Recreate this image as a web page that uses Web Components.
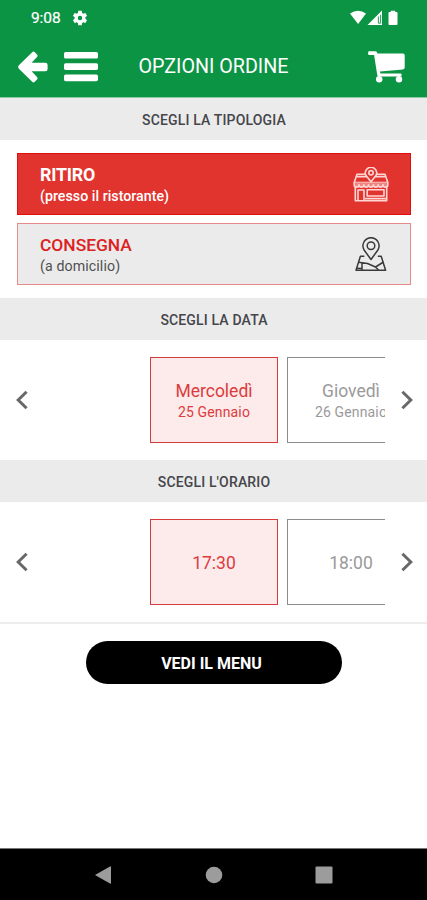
<!DOCTYPE html>
<html lang="it">
<head>
<meta charset="UTF-8">
<meta name="viewport" content="width=device-width, initial-scale=1">
<title>Opzioni ordine</title>
<style>
    html, body { margin: 0; height: 100%; }
    body { font-family: Roboto, "Liberation Sans", sans-serif; background: #fff; overflow: hidden; }
</style>
</head>
<body>
<order-screen></order-screen>

<script>
class StatusBar extends HTMLElement {
    constructor() {
        super();
        this.attachShadow({ mode: 'open' });
    }

    connectedCallback() {
        this.shadowRoot.innerHTML = `
        <style>
            :host { display: flex; align-items: center; box-sizing: border-box; height: 36px; padding: 0 29px 0 31px; background: #0c9445; color: #fff; }
            .time { font-size: 15.5px; line-height: 18px; font-weight: 400; -webkit-text-stroke: 0.2px; letter-spacing: -0.1px; }
            svg { display: block; fill: #fff; }
            .gear { margin-left: 10px; }
            .right { margin-left: auto; display: flex; align-items: center; }
        </style>
        <span class="time">9:08</span>
        <svg class="gear" width="18" height="18" viewBox="0 0 24 24"><path d="M19.14 12.94c.04-.3.06-.61.06-.94 0-.32-.02-.64-.07-.94l2.03-1.58a.49.49 0 0 0 .12-.61l-1.92-3.32a.488.488 0 0 0-.59-.22l-2.39.96c-.5-.38-1.03-.7-1.62-.94l-.36-2.54a.484.484 0 0 0-.48-.41h-3.84c-.24 0-.43.17-.47.41l-.36 2.54c-.59.24-1.13.57-1.62.94l-2.39-.96c-.22-.08-.47 0-.59.22L2.74 8.87c-.12.21-.08.47.12.61l2.03 1.58c-.05.3-.09.63-.09.94s.02.64.07.94l-2.03 1.58a.49.49 0 0 0-.12.61l1.92 3.32c.12.22.37.29.59.22l2.39-.96c.5.38 1.03.7 1.62.94l.36 2.54c.05.24.24.41.48.41h3.84c.24 0 .44-.17.47-.41l.36-2.54c.59-.24 1.13-.56 1.62-.94l2.39.96c.22.08.47 0 .59-.22l1.92-3.32c.12-.22.07-.47-.12-.61l-2.01-1.58zM12 15a3 3 0 1 1 0-6 3 3 0 0 1 0 6z"/></svg>
        <div class="right">
            <svg width="48" height="16" viewBox="0 0 48 16">
                <path d="M0 3.6Q8 -2.2 16 3.6L8.1 14Z"/>
                <path d="M17.5 15L32 0.6V15Z"/>
                <path d="M28.4 6.5V13.2H30.6V4.8" fill="none" stroke="#0c9445" stroke-width="0.9"/>
                <path d="M38.5 2.8q0-.9.9-.9h1.4V.7h4.4v1.2h1.4q.9 0 .9.9v11.3q0 .9-.9.9h-7.2q-.9 0-.9-.9Z"/>
            </svg>
        </div>`;
    }
}
customElements.define('status-bar', StatusBar);

class AppHeader extends HTMLElement {
    constructor() {
        super();
        this.attachShadow({ mode: 'open' });
    }

    connectedCallback() {
        this.shadowRoot.innerHTML = `
        <style>
            :host { display: grid; grid-template-columns: 120px 1fr 120px; align-items: center; box-sizing: border-box; height: 62px; background: #0c9445; color: #fff; border-bottom: 1px solid #8ccaa5; }
            .left { display: flex; align-items: center; padding-left: 18px; gap: 16px; }
            h1 { margin: 0; font-size: 19.7px; line-height: 24px; font-weight: 400; text-align: center; white-space: nowrap; }
            .cart { justify-self: end; margin-right: 22px; }
            svg { display: block; }
        </style>
        <div class="left">
            <svg width="30" height="32" viewBox="0 0 30 32" fill="#fff"><path d="M.9 14.3L14.2 1.2Q15.5 0 16.8 1.2L19 3.4Q20.2 4.7 19 6L13.6 11.7H27.3Q29.6 11.7 29.6 14V18Q29.6 20.3 27.3 20.3H13.6L19 26Q20.2 27.3 19 28.6L16.8 30.8Q15.5 32 14.2 30.8L.9 17.7Q-.6 16 .9 14.3Z"/></svg>
            <svg width="34" height="30" viewBox="0 0 34 30" fill="#fff"><rect width="34" height="6.6" rx="1.6"/><rect y="11.3" width="34" height="6.6" rx="1.6"/><rect y="22.6" width="34" height="6.6" rx="1.6"/></svg>
        </div>
        <h1><slot></slot></h1>
        <svg class="cart" width="37" height="32" viewBox="0 0 37 32">
            <path d="M0.5 0.3H7.3Q8.6 0.3 9 1.6L9.4 2.6H35Q36.7 2.6 36.7 4.3V16.6Q36.7 18.2 35 18.4L12 20.6L12.4 22.6H32.5Q33.7 22.6 33.7 24T32.5 25.6H11Q9.6 25.6 9.3 24.3L6.1 4H1.6Q0 4 0 2.4Z" fill="#fff"/>
            <circle cx="11.2" cy="28.2" r="3.2" fill="#fff"/><circle cx="31" cy="28.2" r="3.2" fill="#fff"/>
        </svg>`;
    }
}
customElements.define('app-header', AppHeader);

class SectionTitle extends HTMLElement {
    constructor() {
        super();
        this.attachShadow({ mode: 'open' });
    }

    connectedCallback() {
        this.shadowRoot.innerHTML = `
        <style>
            :host { display: flex; align-items: center; justify-content: center; height: 42px; background: #ebebeb; color: #45454a; }
            h2 { margin: 0; font-size: 14px; line-height: 18px; font-weight: 500; letter-spacing: 0.15px; padding: 2px 0 0 1px; }
        </style>
        <h2><slot></slot></h2>`;
    }
}
customElements.define('section-title', SectionTitle);

class OrderOption extends HTMLElement {
    constructor() {
        super();
        this.attachShadow({ mode: 'open' });
    }

    connectedCallback() {
        this.shadowRoot.innerHTML = `
        <style>
            :host { display: flex; align-items: center; justify-content: space-between; box-sizing: border-box; height: 62px; padding: 2px 21px 0 22px; border: 1px solid #e58c8a; background: #ebebeb; color: #505050; }
            :host([selected]) { background: #e1342f; border-color: #dc0f0c; color: #fff; }
            .name { font-size: 17.4px; line-height: 22px; font-weight: 500; color: #dc221f; }
            :host([selected]) .name { color: #fff; font-weight: 700; font-size: 17.8px; letter-spacing: -0.2px; }
            .note { font-size: 14.2px; line-height: 20px; letter-spacing: 0.1px; }
            :host([selected]) .note { font-weight: 500; letter-spacing: 0.03px; }
        </style>
        <div>
            <div class="name"><slot name="name"></slot></div>
            <div class="note"><slot name="note"></slot></div>
        </div>
        <slot name="icon"></slot>`;
    }
}
customElements.define('order-option', OrderOption);

class SlidePicker extends HTMLElement {
    constructor() {
        super();
        this.attachShadow({ mode: 'open' });
    }

    connectedCallback() {
        this.shadowRoot.innerHTML = `
        <style>
            :host { display: grid; grid-template-columns: 42px 343px 42px; align-items: center; height: 120px; background: #fff; }
            .track { display: flex; gap: 9px; padding-left: 108px; overflow: hidden; }
            button { display: flex; align-items: center; justify-content: center; height: 40px; padding: 0 0 0 1px; border: 0; background: none; }
            svg { fill: none; stroke: #686868; stroke-width: 3; }
        </style>
        <button aria-label="Indietro"><svg width="12" height="20" viewBox="0 0 12 20"><path d="M10.6 1.8L2.2 10L10.6 18.2"/></svg></button>
        <div class="track"><slot></slot></div>
        <button aria-label="Avanti"><svg width="12" height="20" viewBox="0 0 12 20"><path d="M1.4 1.8L9.8 10L1.4 18.2"/></svg></button>`;
    }
}
customElements.define('slide-picker', SlidePicker);

class PickerCard extends HTMLElement {
    constructor() {
        super();
        this.attachShadow({ mode: 'open' });
    }

    connectedCallback() {
        this.shadowRoot.innerHTML = `
        <style>
            :host { display: flex; flex: none; flex-direction: column; align-items: center; justify-content: center; box-sizing: border-box; width: 128px; height: 86px; padding-top: 2px; border: 1.5px solid #8c8c8c; color: #9a9a9a; background: #fff; white-space: nowrap; }
            :host([selected]) { border-color: #d63b3b; background: #fdeaea; color: #dc3c40; }
            .main { font-size: 17.5px; line-height: 22px; }
            .sub { font-size: 14px; line-height: 20px; letter-spacing: 0.15px; }
        </style>
        <div class="main"><slot></slot></div>
        <div class="sub"><slot name="sub"></slot></div>`;
        if (!this.querySelector('[slot="sub"]')) this.shadowRoot.querySelector('.sub').remove();
    }
}
customElements.define('picker-card', PickerCard);

class PillButton extends HTMLElement {
    constructor() {
        super();
        this.attachShadow({ mode: 'open' });
    }

    connectedCallback() {
        this.shadowRoot.innerHTML = `
        <style>
            :host { display: block; }
            button { display: block; width: 256px; height: 43px; margin: 0 auto; padding: 2px 0 0; border: 0; border-radius: 22px; background: #000; color: #fff; font: 700 16px/20px Roboto, "Liberation Sans", sans-serif; text-indent: -4px; }
        </style>
        <button><slot></slot></button>`;
    }
}
customElements.define('pill-button', PillButton);

class NavigationBar extends HTMLElement {
    constructor() {
        super();
        this.attachShadow({ mode: 'open' });
    }

    connectedCallback() {
        this.shadowRoot.innerHTML = `
        <style>
            :host { display: flex; align-items: center; justify-content: space-between; box-sizing: border-box; height: 52px; padding: 0 94px; background: #000; border-top: 1px solid #777; }
            svg { fill: #9c9c9c; }
        </style>
        <svg width="18" height="18" viewBox="0 0 18 18"><path d="M1 9L16 .4q1-.4 1 .6v16q0 1-1 .6Z"/></svg>
        <svg width="18" height="18" viewBox="0 0 18 18"><circle cx="9" cy="9" r="8.3"/></svg>
        <svg width="18" height="18" viewBox="0 0 18 18"><rect x=".5" y=".5" width="17" height="17" rx="1"/></svg>`;
    }
}
customElements.define('navigation-bar', NavigationBar);

class OrderScreen extends HTMLElement {
    constructor() {
        super();
        this.attachShadow({ mode: 'open' });
    }

    connectedCallback() {
        this.shadowRoot.innerHTML = `
        <style>
            :host { display: flex; flex-direction: column; width: 100%; height: 100vh; background: #fff; }
            .options { display: flex; flex-direction: column; gap: 8px; padding: 13px 16px 13px 17px; }
            .options svg { display: block; fill: none; }
            .footer { border-top: 2px solid #ededed; padding-top: 17px; }
            navigation-bar { margin-top: auto; }
        </style>
        <status-bar></status-bar>
        <app-header>OPZIONI ORDINE</app-header>

        <section-title>SCEGLI LA TIPOLOGIA</section-title>
        <div class="options">
            <order-option selected>
                <span slot="name">RITIRO</span>
                <span slot="note">(presso il ristorante)</span>
                <svg slot="icon" width="36" height="36" viewBox="0 0 36 36" stroke="#ffd6d4" stroke-width="1.6" stroke-linejoin="round">
                    <path d="M13 7.2H4L1.2 15.5H34.8L32 7.2H23M4 9.6H14M22 9.6H32"/>
                    <path d="M1.2 15.5v2.2a2.4 2.4 0 0 0 4.8 0a2.4 2.4 0 0 0 4.8 0a2.4 2.4 0 0 0 4.8 0a2.4 2.4 0 0 0 4.8 0a2.4 2.4 0 0 0 4.8 0a2.4 2.4 0 0 0 4.8 0a2.4 2.4 0 0 0 4.8 0v-2.2" fill="#ef8581"/>
                    <path d="M2.3 20V33.8H33.7V20M5 33V23H11V33M14.2 22.8H31V29H14.2ZM12 31.6H33"/>
                    <path d="M18 14.8L13.2 8.8a5.6 5.6 0 1 1 9.6 0Z" fill="#e1342f"/>
                    <circle cx="18" cy="5.8" r="2.2"/>
                </svg>
            </order-option>
            <order-option>
                <span slot="name">CONSEGNA</span>
                <span slot="note">(a domicilio)</span>
                <svg slot="icon" width="36" height="36" viewBox="0 0 36 36" stroke="#3a3a3a" stroke-width="1.5" stroke-linejoin="round">
                    <path d="M11.4 19.3H7.4L3 33.2H32.6L28.2 19.3H24.8"/>
                    <path d="M5.6 25.2L14.5 26.5L22.5 30L30.5 25M9 26V33M22.5 30L25.5 33M3.6 31.2L8.8 31.6"/>
                    <path d="M18 22.5L11.1 13a8.1 8.1 0 1 1 13.8 0Z" fill="#ebebeb"/>
                    <circle cx="18" cy="8.8" r="3.8"/>
                </svg>
            </order-option>
        </div>

        <section-title>SCEGLI LA DATA</section-title>
        <slide-picker>
            <picker-card selected>Mercoledì<span slot="sub">25 Gennaio</span></picker-card>
            <picker-card>Giovedì<span slot="sub">26 Gennaio</span></picker-card>
        </slide-picker>

        <section-title>SCEGLI L'ORARIO</section-title>
        <slide-picker>
            <picker-card selected>17:30</picker-card>
            <picker-card>18:00</picker-card>
        </slide-picker>

        <div class="footer">
            <pill-button>VEDI IL MENU</pill-button>
        </div>
        <navigation-bar></navigation-bar>`;
    }
}
customElements.define('order-screen', OrderScreen);
</script>
</body>
</html>
